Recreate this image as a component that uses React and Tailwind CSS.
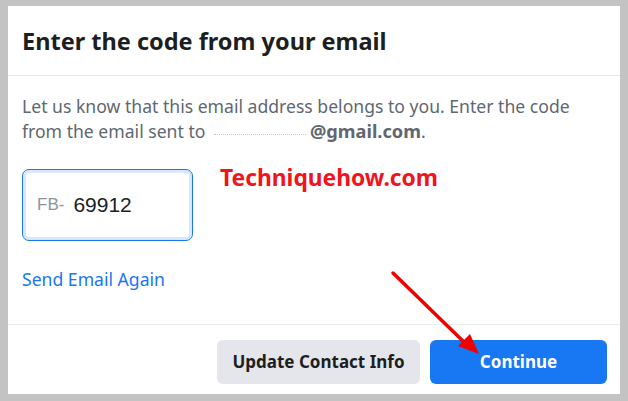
import React from "react";

export default function App() {
  return (
    <div className="w-[628px] h-[401px] bg-[#c3c3c3] pt-[6px] pl-[8px] pr-[8px] pb-[7px]" style={{ fontFamily: '"Noto Sans", "Open Sans", sans-serif' }}>
      <div className="relative w-full h-full bg-white flex flex-col">
        <div className="h-[70px] shrink-0 flex items-center px-[14px] border-b border-[#e4e6eb]">
          <h1 className="text-[23.5px] leading-[30px] font-bold text-[#1c1e21]">Enter the code from your email</h1>
        </div>
        <div className="flex-1 px-[14px] pt-[18px] relative">
          <p className="text-[17.6px] leading-[25px] text-[#606770]">
            Let us know that this email address belongs to you. Enter the code from the email sent to{" "}
            <span className="inline-block w-[100px] align-middle h-[10px] relative">
              <span className="absolute left-[4px] right-[4px] top-[6px] border-b border-dotted border-[#c8c8c8]" />
            </span>
            <span className="font-bold text-[18.2px]">@gmail.com</span>.
          </p>
          <div className="mt-[25px] flex items-start">
            <div className="w-[171px] h-[72px] rounded-[7px] border border-[#1877f2] ring-[3px] ring-inset ring-[#d9e7fb] flex items-center pl-[14px]" style={{ fontFamily: '"Liberation Sans", Arial, sans-serif' }}>
              <span className="text-[17px] text-[#8d949e]">FB-</span>
              <span className="ml-[9px] text-[21px] text-[#1c1e21]">69912</span>
            </div>
            <div className="ml-[27px] -mt-[8px] text-[22.8px] font-bold text-[#f0141e]">Techniquehow.com</div>
          </div>
          <div className="mt-[26px] text-[17.6px] leading-[24px] text-[#1877f2]">Send Email Again</div>
        </div>
        <div className="h-[70px] shrink-0 border-t border-[#e9ebee] flex items-start justify-end gap-[10px] pt-[15px] pr-[13px]">
          <button className="w-[203px] h-[44px] rounded-[6px] bg-[#e4e6eb] text-[17px] font-bold text-[#1c1e21]">Update Contact Info</button>
          <button className="w-[177px] h-[44px] rounded-[6px] bg-[#1877f2] text-[17px] font-bold text-white">Continue</button>
        </div>
        <svg className="absolute left-0 top-0 pointer-events-none" width="612" height="388" viewBox="0 0 612 388">
          <line x1="385" y1="267" x2="458" y2="338" stroke="#f00000" strokeWidth="3.5" strokeLinecap="round" />
          <polygon points="471,348 450,340 462,328" fill="#f00000" />
        </svg>
      </div>
    </div>
  );
}
